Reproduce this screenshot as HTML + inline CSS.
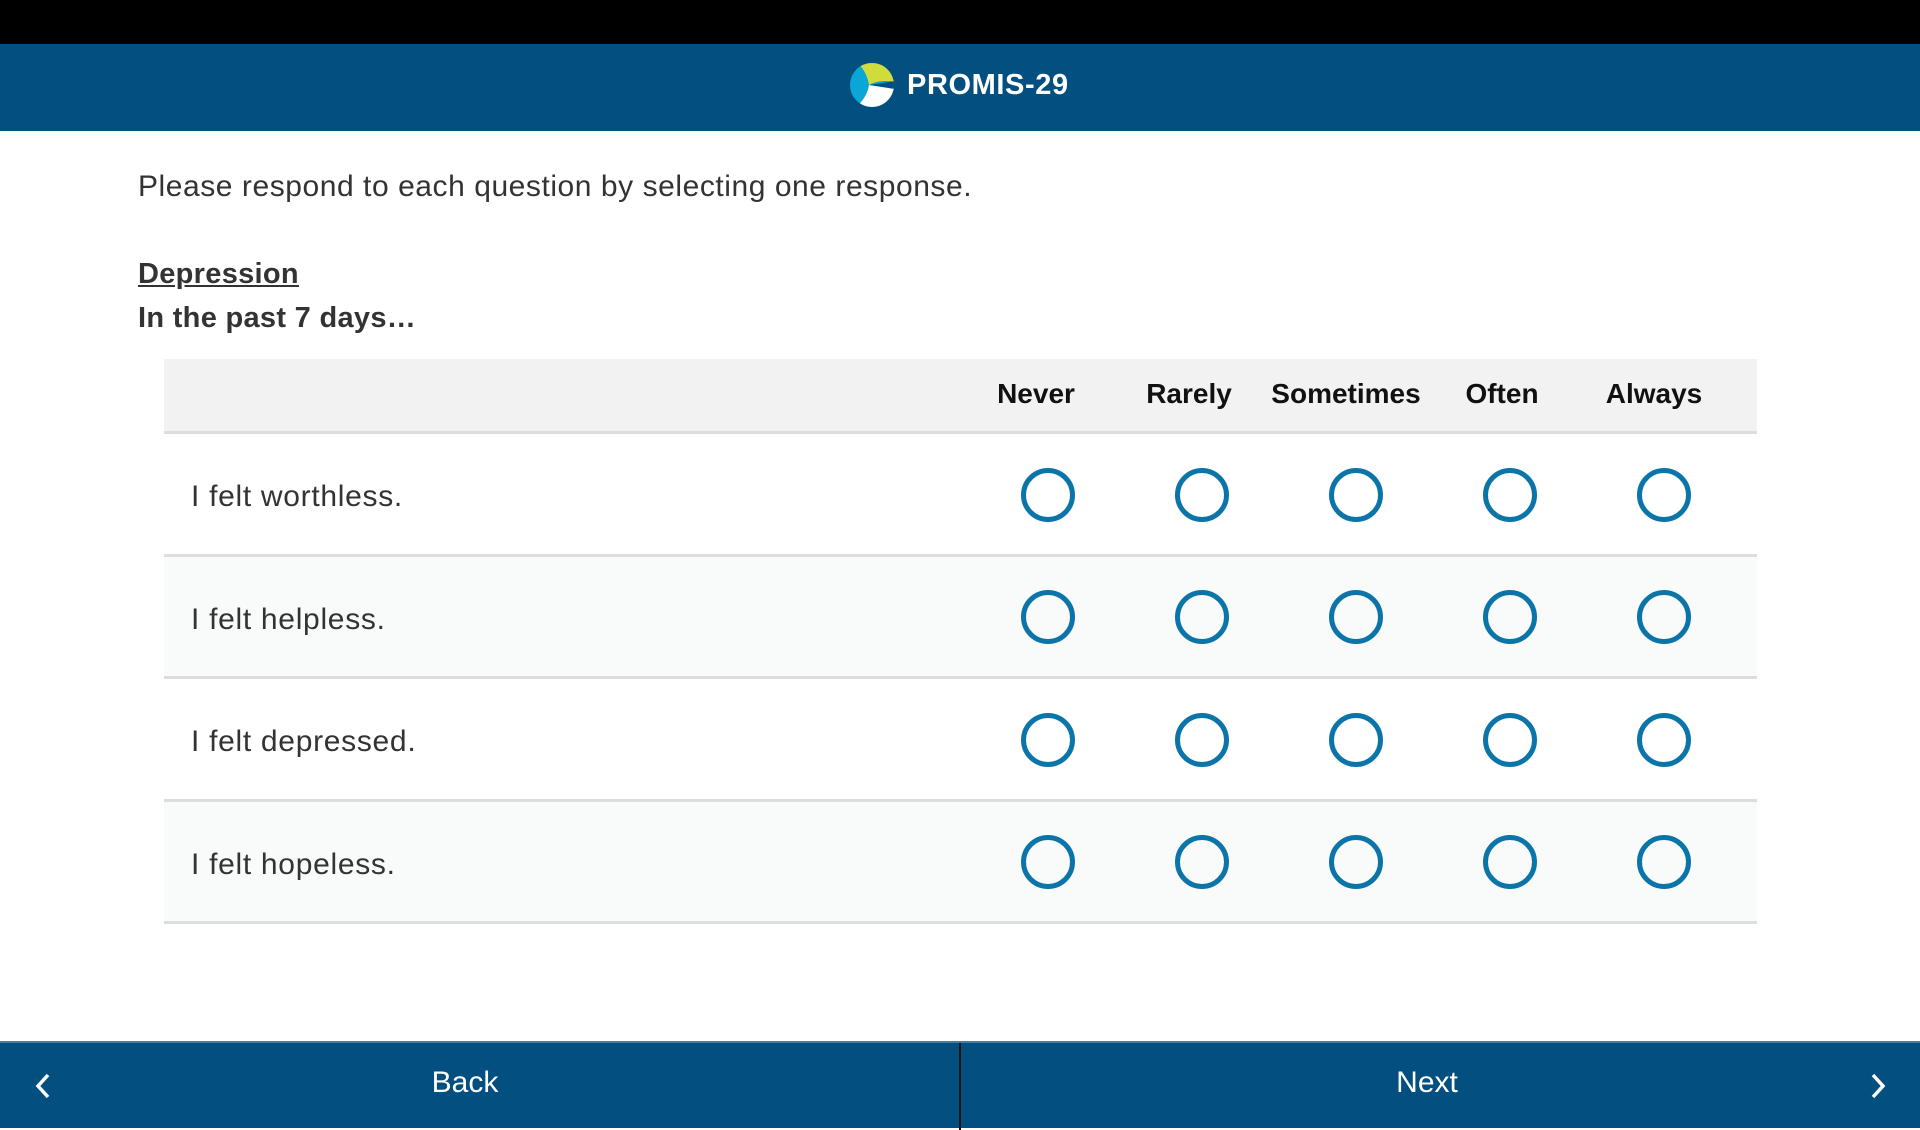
<!DOCTYPE html>
<html><head><meta charset="utf-8"><style>
*{margin:0;padding:0;box-sizing:border-box}
body{width:1920px;height:1128px;position:relative;background:#fff;font-family:"Liberation Sans",Arial,sans-serif;color:#333;overflow:hidden}
.top{position:absolute;left:0;top:0;width:1920px;height:44px;background:#000}
.hdr{position:absolute;left:0;top:44px;width:1920px;height:87px;background:#034f80}
.title{position:absolute;left:907px;top:68px;font-size:29px;font-weight:bold;color:#fff;line-height:34px;letter-spacing:0.6px}
.t{position:absolute;left:138px;font-size:30px;line-height:34px;letter-spacing:0.55px}
.tbl{position:absolute;left:164px;top:359px;width:1593px}
.row{position:relative;height:122.5px;border-bottom:3px solid #ddd}
.row.h{height:75px;background:#f2f2f2}
.row.alt{background:#f9fafa}
.row .q{position:absolute;left:27px;top:0;line-height:125px;font-size:30px;color:#333;letter-spacing:0.7px}
.ch{position:absolute;top:0;line-height:70px;font-size:28px;font-weight:bold;color:#111;transform:translateX(-50%)}
.r{position:absolute;top:50%;width:54px;height:54px;margin:-26px 0 0 -27px;border:5px solid #0b74a8;border-radius:50%}
.foot{position:absolute;left:0;top:1041px;width:1920px;height:87px;background:#034f80;border-top:2px solid #4a7ca0}
.div{position:absolute;left:959px;top:0;width:2px;height:87px;background:#111}
.ft{position:absolute;top:0;line-height:80px;font-size:30px;color:#fff;transform:translateX(-50%)}
</style></head><body>
<div class="top"></div>
<div class="hdr"></div>
<svg style="position:absolute;left:849px;top:62px" width="46" height="46" viewBox="0 0 46 46">
<defs><clipPath id="c"><circle cx="23" cy="23" r="22"/></clipPath></defs>
<g clip-path="url(#c)">
<rect width="46" height="46" fill="#0aa6d6"/>
<path d="M8 0 L46 0 L46 20 Q30 17 20 23 Q18 10 8 0Z" fill="#cfdc3c"/>
<path d="M6 46 L46 46 L46 26 Q30 24 20 23 Q18 36 6 46Z" fill="#fff"/>
<path d="M46 19 L46 27 L20 23Z" fill="#034f80"/>
</g>
</svg>
<div class="title">PROMIS-29</div>
<div class="t" style="top:170px">Please respond to each question by selecting one response.</div>
<div class="t" style="top:257px;font-weight:bold;text-decoration:underline;font-size:29px;letter-spacing:0.3px">Depression</div>
<div class="t" style="top:301px;font-weight:bold;font-size:29px;letter-spacing:0.3px">In the past 7 days…</div>
<div class="tbl">
<div class="row h">
<span class="ch" style="left:872px">Never</span><span class="ch" style="left:1025px">Rarely</span><span class="ch" style="left:1182px">Sometimes</span><span class="ch" style="left:1338px">Often</span><span class="ch" style="left:1490px">Always</span></div>
<div class="row"><span class="q">I felt worthless.</span><i class="r" style="left:884px"></i><i class="r" style="left:1038px"></i><i class="r" style="left:1192px"></i><i class="r" style="left:1346px"></i><i class="r" style="left:1500px"></i></div>
<div class="row alt"><span class="q">I felt helpless.</span><i class="r" style="left:884px"></i><i class="r" style="left:1038px"></i><i class="r" style="left:1192px"></i><i class="r" style="left:1346px"></i><i class="r" style="left:1500px"></i></div>
<div class="row"><span class="q">I felt depressed.</span><i class="r" style="left:884px"></i><i class="r" style="left:1038px"></i><i class="r" style="left:1192px"></i><i class="r" style="left:1346px"></i><i class="r" style="left:1500px"></i></div>
<div class="row alt"><span class="q">I felt hopeless.</span><i class="r" style="left:884px"></i><i class="r" style="left:1038px"></i><i class="r" style="left:1192px"></i><i class="r" style="left:1346px"></i><i class="r" style="left:1500px"></i></div>
</div>
<div class="foot">
<svg style="position:absolute;left:33px;top:29px" width="20" height="28" viewBox="0 0 20 28"><path d="M15 3 L5 14 L15 25" stroke="#fff" stroke-width="3.5" fill="none"/></svg>
<span class="ft" style="left:465px">Back</span>
<div class="div"></div>
<span class="ft" style="left:1427px">Next</span>
<svg style="position:absolute;left:1868px;top:29px" width="20" height="28" viewBox="0 0 20 28"><path d="M5 3 L15 14 L5 25" stroke="#fff" stroke-width="3.5" fill="none"/></svg>
</div>
</body></html>
